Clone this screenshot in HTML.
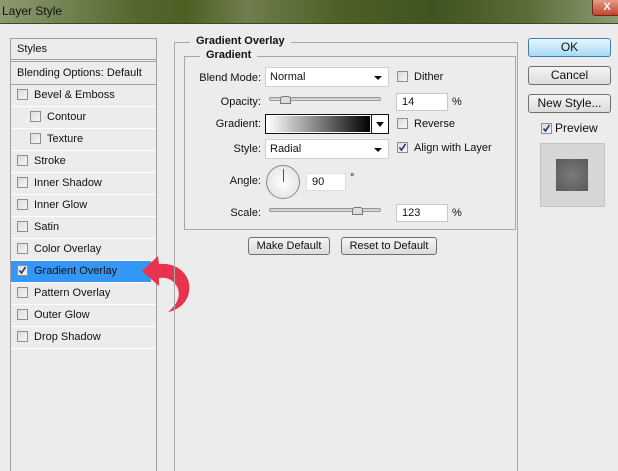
<!DOCTYPE html>
<html><head><style>
*{margin:0;padding:0;box-sizing:border-box}
html,body{width:618px;height:471px;overflow:hidden}
body{background:#ececec;font-family:"Liberation Sans",Arial,sans-serif;font-size:11px;color:#111;position:relative}
.a{position:absolute;white-space:nowrap}
.title{left:0;top:0;width:618px;height:24px;background:linear-gradient(90deg,#8d9a70 0%,#6f7f4c 12%,#55672e 22%,#4c6024 30%,#6f7d4c 40%,#4d6126 55%,#3f5420 70%,#5a6b36 85%,#8e9b73 100%);border-bottom:1px solid #3a4a22}
.title span{position:absolute;left:2px;top:4px;font-size:12px;color:#111}
.close{left:592px;top:-2px;width:30px;height:18px;background:linear-gradient(#e8a090,#c7442a);border:1px solid #6b2a1a;border-radius:3px;color:#fff;font-weight:bold;text-align:center;font-size:11px;line-height:16px}
.panel{left:10px;top:38px;width:147px;height:440px;border:1px solid #a0a0a0;background:#ececec}
.row{position:absolute;left:0;width:145px;height:22px;border-bottom:1px solid #fff;line-height:21px;padding-left:6px;white-space:nowrap}
.cb{display:inline-block;width:11px;height:11px;border:1px solid #8f8f8f;background:linear-gradient(135deg,#dcdcdc,#f6f6f6);vertical-align:-2px;margin-right:6px;position:relative}
.cb svg{position:absolute;left:0;top:0}
.grp{border:1px solid #a8a8a8}
.leg{background:#ececec;font-weight:bold;padding:0 6px}
.lbl{text-align:right;width:78px}
.sel{background:#fff;border:1px solid #d0d0d0;height:20px;line-height:18px;padding-left:4px}
.sel::after{content:"";position:absolute;right:6px;top:8px;border-left:4px solid transparent;border-right:4px solid transparent;border-top:4px solid #111}
.inp{background:#fff;border:1px solid #c8c8c8;height:18px;line-height:16px;padding-left:5px}
.track{height:4px;border:1px solid #999;border-radius:3px;background:linear-gradient(#bbb,#eee)}
.thumb{width:11px;height:8px;background:#ddd;border:1px solid #777;border-radius:3px 3px 0 0}
.btn{border:1px solid #707070;border-radius:3px;background:linear-gradient(#f4f4f4,#dcdcdc);text-align:center;line-height:16px;font-size:12px}
</style></head><body>
<div class="a title"><span>Layer Style</span></div>
<div class="a close">X</div>

<div class="a panel">
 <div class="row" style="top:0;height:23px;border-bottom:3px double #a0a0a0">Styles</div>
 <div class="row" style="top:24px;border-bottom:1px solid #a0a0a0">Blending Options: Default</div>
 <div class="row" style="top:46px"><span class="cb"></span>Bevel &amp; Emboss</div>
 <div class="row" style="top:68px;padding-left:19px"><span class="cb"></span>Contour</div>
 <div class="row" style="top:90px;padding-left:19px"><span class="cb"></span>Texture</div>
 <div class="row" style="top:112px"><span class="cb"></span>Stroke</div>
 <div class="row" style="top:134px"><span class="cb"></span>Inner Shadow</div>
 <div class="row" style="top:156px"><span class="cb"></span>Inner Glow</div>
 <div class="row" style="top:178px"><span class="cb"></span>Satin</div>
 <div class="row" style="top:200px"><span class="cb"></span>Color Overlay</div>
 <div class="row" style="top:222px;background:#3597f5;width:140px"><span class="cb"><svg width="9" height="9"><path d="M1.5 4.5 L3.5 7 L7.5 1" stroke="#22387a" stroke-width="1.6" fill="none"/></svg></span>Gradient Overlay</div>
 <div class="row" style="top:244px"><span class="cb"></span>Pattern Overlay</div>
 <div class="row" style="top:266px"><span class="cb"></span>Outer Glow</div>
 <div class="row" style="top:288px"><span class="cb"></span>Drop Shadow</div>
</div>
<svg class="a" style="left:138px;top:252px" width="60" height="62"><path d="M4 19 L20 4 L21 12 C42 10 56 26 50 44 C47 52 40 58 30 60 C40 52 44 42 38 33 C34 27 28 25 21 26 L21 34 Z" fill="#e8334f"/></svg>

<div class="a grp" style="left:174px;top:42px;width:344px;height:440px"></div>
<div class="a leg" style="left:190px;top:35px">Gradient Overlay</div>
<div class="a grp" style="left:184px;top:56px;width:332px;height:174px"></div>
<div class="a leg" style="left:200px;top:49px">Gradient</div>

<div class="a lbl" style="left:183px;top:72px">Blend Mode:</div>
<div class="a sel" style="left:265px;top:67px;width:124px">Normal</div>
<div class="a" style="left:397px;top:71px"><span class="cb"></span>Dither</div>

<div class="a lbl" style="left:183px;top:96px">Opacity:</div>
<div class="a track" style="left:269px;top:97px;width:112px"></div>
<div class="a thumb" style="left:280px;top:96px"></div>
<div class="a inp" style="left:396px;top:93px;width:52px">14</div>
<div class="a" style="left:452px;top:96px">%</div>

<div class="a lbl" style="left:183px;top:118px">Gradient:</div>
<div class="a" style="left:265px;top:114px;width:124px;height:20px;border:1px solid #111;background:#fff"><div style="position:absolute;left:1px;top:1px;width:103px;height:16px;background:linear-gradient(90deg,#fff,#000)"></div><div style="position:absolute;right:4px;top:7px;border-left:4px solid transparent;border-right:4px solid transparent;border-top:5px solid #111"></div><div style="position:absolute;left:105px;top:0;width:1px;height:18px;background:#111"></div></div>
<div class="a" style="left:397px;top:118px"><span class="cb"></span>Reverse</div>

<div class="a lbl" style="left:183px;top:143px">Style:</div>
<div class="a sel" style="left:265px;top:139px;width:124px">Radial</div>
<div class="a" style="left:397px;top:142px"><span class="cb"><svg width="9" height="9"><path d="M1.5 4.5 L3.5 7 L7.5 1" stroke="#22387a" stroke-width="1.6" fill="none"/></svg></span>Align with Layer</div>

<div class="a lbl" style="left:183px;top:175px">Angle:</div>
<div class="a" style="left:266px;top:165px;width:34px;height:34px;border:1px solid #888;border-radius:50%;background:radial-gradient(#fff,#ddd)"><div style="position:absolute;left:16px;top:3px;width:1px;height:13px;background:#555"></div></div>
<div class="a inp" style="left:306px;top:173px;width:40px;border-color:#ddd">90</div>
<div class="a" style="left:350px;top:172px">°</div>

<div class="a lbl" style="left:183px;top:207px">Scale:</div>
<div class="a track" style="left:269px;top:208px;width:112px"></div>
<div class="a thumb" style="left:352px;top:207px"></div>
<div class="a inp" style="left:396px;top:204px;width:52px">123</div>
<div class="a" style="left:452px;top:207px">%</div>

<div class="a btn" style="left:248px;top:237px;width:82px;height:18px;font-size:11px">Make Default</div>
<div class="a btn" style="left:341px;top:237px;width:96px;height:18px;font-size:11px">Reset to Default</div>

<div class="a btn" style="left:528px;top:38px;width:83px;height:19px;border-color:#3c7fb1;background:linear-gradient(#eaf6fd,#a7d9f5)">OK</div>
<div class="a btn" style="left:528px;top:66px;width:83px;height:19px">Cancel</div>
<div class="a btn" style="left:528px;top:94px;width:83px;height:19px">New Style...</div>
<div class="a" style="left:541px;top:121px;font-size:12px"><span class="cb" style="margin-right:3px"><svg width="9" height="9"><path d="M1.5 4.5 L3.5 7 L7.5 1" stroke="#22387a" stroke-width="1.6" fill="none"/></svg></span>Preview</div>
<div class="a" style="left:540px;top:143px;width:65px;height:64px;background:#d6d6d6;border:1px solid #c4c4c4"><div style="position:absolute;left:15px;top:15px;width:32px;height:32px;background:radial-gradient(#7a7a7a,#5a5a5a)"></div></div>
</body></html>
